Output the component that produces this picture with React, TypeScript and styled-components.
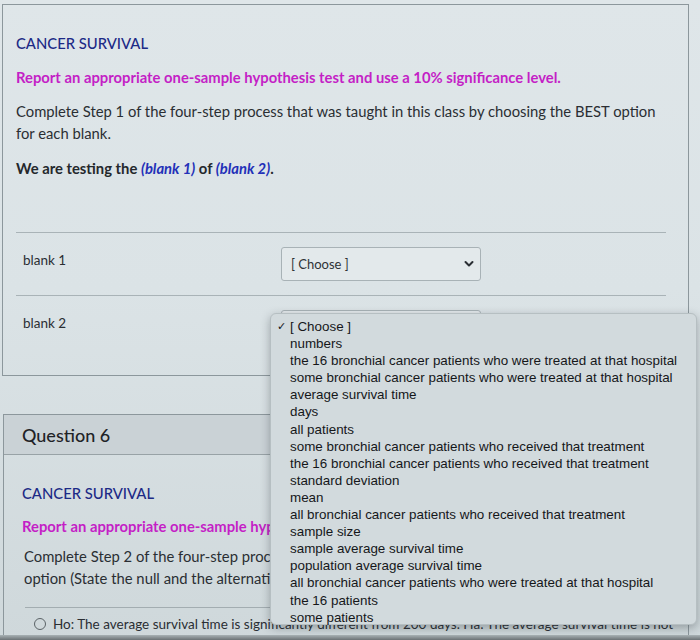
import React from "react";
import styled, { createGlobalStyle } from "styled-components";

const Global = createGlobalStyle`
  html, body { margin: 0; padding: 0; }
  body { background: #d9e1e4; overflow: hidden; }
`;

const Page = styled.div`
  position: relative;
  width: 700px;
  height: 640px;
  overflow: hidden;
  background: linear-gradient(180deg, #dfe6e9 0%, #dbe3e6 45%, #cfd8db 100%);
  font-family: Lato, "Open Sans", sans-serif;
  color: #2b2f33;
  padding-top: 4px;
  box-sizing: border-box;
`;

const Card = styled.section`
  margin: 0 11px 0 2px;
  border: 1px solid #8c979c;
  padding: 28px 22px 0 13px;
  height: 372px;
  box-sizing: border-box;
`;

const Title = styled.div<{ $gap?: number }>`
  color: #1c2a86;
  font-size: 14.8px;
  line-height: 20px;
  font-weight: 500;
  margin: 0 0 ${(p) => p.$gap ?? 13}px 0;
`;

const Instruction = styled.div<{ $gap?: number }>`
  color: #c41fc6;
  font-size: 14.8px;
  line-height: 20px;
  font-weight: 700;
  margin: 0 0 ${(p) => p.$gap ?? 13}px 0;
  white-space: nowrap;
`;

const Para = styled.p<{ $indent?: number; $gap?: number }>`
  font-size: 14.8px;
  line-height: 21.5px;
  margin: 0 0 ${(p) => p.$gap ?? 12}px ${(p) => p.$indent ?? 0}px;
  color: #2a2e33;
  white-space: pre-line;
`;

const Testing = styled.p`
  font-size: 14.8px;
  line-height: 20px;
  margin: 0;
  font-weight: 700;
  color: #24282c;
`;

const BlankRef = styled.span`
  color: #2330b8;
  font-style: italic;
`;

const Answers = styled.div`
  margin-top: 54px;
`;

const Row = styled.div`
  display: grid;
  grid-template-columns: 265px 200px;
  border-top: 1px solid #a9b3b7;
  height: 63px;
  padding-top: 14px;
  box-sizing: border-box;
`;

const Label = styled.div`
  font-size: 13.5px;
  line-height: 18px;
  padding: 4px 0 0 7px;
  color: #2a2e33;
`;

const Select = styled.div`
  height: 34px;
  border: 1px solid #a8b2b6;
  border-radius: 3px;
  background: #e3e9eb;
  display: flex;
  align-items: center;
  justify-content: space-between;
  padding: 0 6px 0 9px;
  box-sizing: border-box;
  font-size: 13px;
  color: #2f3337;
`;

const Gap = styled.div`
  height: 38px;
`;

const Card2 = styled.section`
  margin: 0 11px 0 3px;
  border: 1px solid #8c979c;
  border-bottom: none;
  height: 230px;
`;

const Header = styled.div`
  height: 39px;
  background: #cad2d6;
  border-bottom: 1px solid #98a2a6;
  display: flex;
  align-items: center;
  padding: 0 18px;
  font-size: 18px;
  font-weight: 500;
  color: #1f2327;
`;

const Body2 = styled.div`
  padding: 28px 0 0 18px;
`;

const Choice = styled.div`
  margin: 18px 0 0 3px;
  border-top: 1px solid #a3adb1;
  padding: 8px 0 0 9px;
  display: flex;
  align-items: center;
  gap: 7px;
  font-size: 13.5px;
  white-space: nowrap;
  color: #2a2e33;
`;

const Radio = styled.span`
  width: 10px;
  height: 10px;
  border: 1.3px solid #5b6367;
  border-radius: 50%;
  flex: none;
`;

const Bezel = styled.div`
  position: absolute;
  left: 0;
  right: 0;
  bottom: 0;
  height: 5px;
  background: linear-gradient(180deg, #a8b1b4, #6c7376);
`;

const Menu = styled.div`
  position: absolute;
  left: 270px;
  top: 313px;
  width: 427px;
  height: 312px;
  background: #d2dadd;
  border: 1px solid #b6bfc2;
  border-radius: 6px;
  box-shadow: 0 3px 10px rgba(40, 50, 55, 0.35);
  box-sizing: border-box;
  padding: 4px 0 0 0;
  font-family: "Liberation Sans", Arial, Helvetica, sans-serif;
  font-size: 13.4px;
  color: #15171a;
`;

const Item = styled.div`
  display: flex;
  line-height: 17.1px;
  white-space: nowrap;
`;

const Check = styled.span`
  width: 19px;
  padding-left: 6px;
  box-sizing: border-box;
  font-size: 11px;
`;

const Chevron = () => (
  <svg width="10" height="8" viewBox="0 0 10 8">
    <path d="M1.5 2 L5 5.5 L8.5 2" fill="none" stroke="#2a2e33" strokeWidth="2" strokeLinecap="round" strokeLinejoin="round" />
  </svg>
);

const options = [
  "[ Choose ]",
  "numbers",
  "the 16 bronchial cancer patients who were treated at that hospital",
  "some bronchial cancer patients who were treated at that hospital",
  "average survival time",
  "days",
  "all patients",
  "some bronchial cancer patients who received that treatment",
  "the 16 bronchial cancer patients who received that treatment",
  "standard deviation",
  "mean",
  "all bronchial cancer patients who received that treatment",
  "sample size",
  "sample average survival time",
  "population average survival time",
  "all bronchial cancer patients who were treated at that hospital",
  "the 16 patients",
  "some patients",
];

export default function App() {
  return (
    <>
      <Global />
      <Page>
        <Card>
          <Title $gap={14}>CANCER SURVIVAL</Title>
          <Instruction $gap={14}>Report an appropriate one-sample hypothesis test and use a 10% significance level.</Instruction>
          <Para $gap={14}>
            {"Complete Step 1 of the four-step process that was taught in this class by choosing the BEST option\nfor each blank."}
          </Para>
          <Testing>
            We are testing the <BlankRef>(blank 1)</BlankRef> of <BlankRef>(blank 2)</BlankRef>.
          </Testing>
          <Answers>
            <Row>
              <Label>blank 1</Label>
              <Select>
                <span>[ Choose ]</span>
                <Chevron />
              </Select>
            </Row>
            <Row>
              <Label>blank 2</Label>
              <Select>
                <span>[ Choose ]</span>
                <Chevron />
              </Select>
            </Row>
          </Answers>
        </Card>
        <Gap />
        <Card2>
          <Header>Question 6</Header>
          <Body2>
            <Title>CANCER SURVIVAL</Title>
            <Instruction $gap={10}>Report an appropriate one-sample hypothesis test and use a 10% significance level.</Instruction>
            <Para $indent={2} $gap={0}>
              {"Complete Step 2 of the four-step process that was taught in this class by choosing the BEST\noption (State the null and the alternative hypotheses)."}
            </Para>
            <Choice>
              <Radio />
              <span>Ho: The average survival time is significantly different from 200 days. Ha: The average survival time is not</span>
            </Choice>
          </Body2>
        </Card2>
        <Menu>
          {options.map((o, i) => (
            <Item key={o}>
              <Check>{i === 0 ? "✓" : ""}</Check>
              <span>{o}</span>
            </Item>
          ))}
        </Menu>
        <Bezel />
      </Page>
    </>
  );
}
